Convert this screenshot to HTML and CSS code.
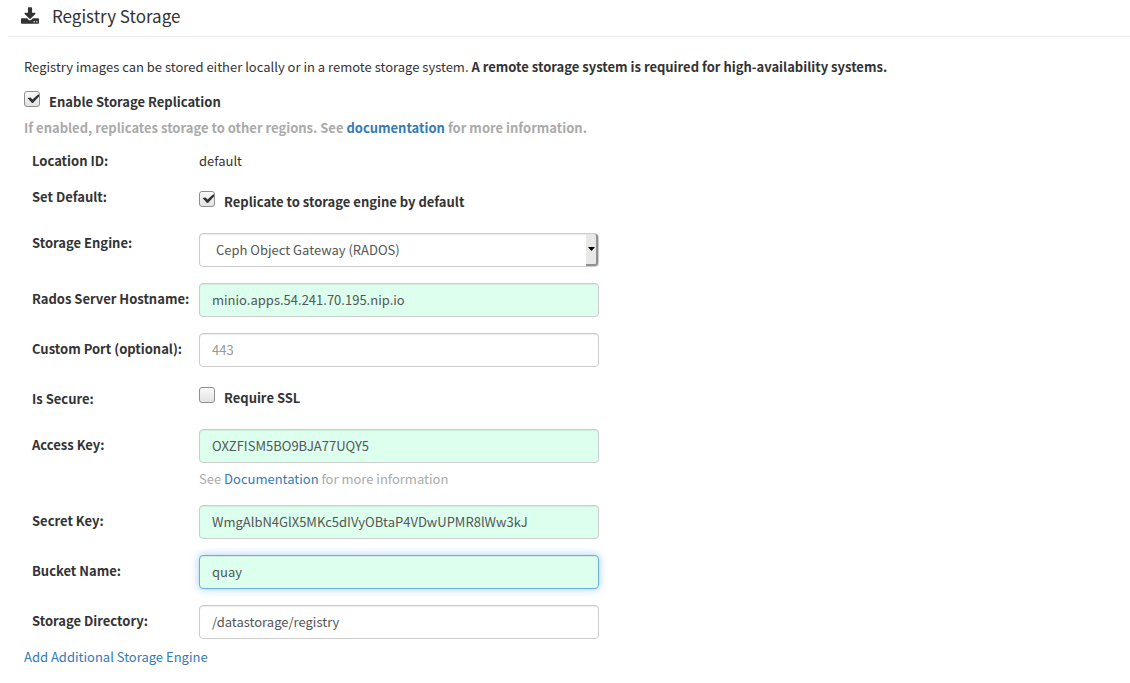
FILE: index.html
```html
<!DOCTYPE html>
<html lang="en">
<head>
<meta charset="utf-8">
<meta name="viewport" content="width=device-width, initial-scale=1">
<title>Registry Storage</title>
<link rel="stylesheet" href="styles.css">
</head>
<body>
<section class="panel">
  <header class="panel-header">
    <svg class="panel-icon" viewBox="0 0 1664 1536" aria-hidden="true"><path fill="currentColor" d="M1280 1344q0-26-19-45t-45-19-45 19-19 45 19 45 45 19 45-19 19-45zm256 0q0-26-19-45t-45-19-45 19-19 45 19 45 45 19 45-19 19-45zm128-224v320q0 40-28 68t-68 28h-1472q-40 0-68-28t-28-68v-320q0-40 28-68t68-28h465l135 136q58 56 136 56t136-56l136-136h464q40 0 68 28t28 68zm-325-569q17 41-14 70l-448 448q-18 19-45 19t-45-19l-448-448q-31-29-14-70 17-39 59-39h256v-448q0-26 19-45t45-19h256q26 0 45 19t19 45v448h256q42 0 59 39z"/></svg>
    <h1 class="panel-title">Registry Storage</h1>
  </header>
  <form class="panel-body">
    <p class="intro">Registry images can be stored either locally or in a remote storage system. <strong>A remote storage system is required for high-availability systems.</strong></p>
    <div class="check check-top">
      <input class="check-box" type="checkbox" id="replication" checked>
      <label class="check-label" for="replication">Enable Storage Replication</label>
    </div>
    <p class="help help-strong">If enabled, replicates storage to other regions. See <a class="link" href="#">documentation</a> for more information.</p>

    <div class="fields">
      <div class="row">
        <span class="label">Location ID:</span>
        <span class="value">default</span>
      </div>
      <div class="row">
        <span class="label">Set Default:</span>
        <div class="check check-row">
          <input class="check-box" type="checkbox" id="by-default" checked>
          <label class="check-label" for="by-default">Replicate to storage engine by default</label>
        </div>
      </div>
      <div class="row">
        <label class="label" for="engine">Storage Engine:</label>
        <div class="select">
          <select class="control select-control" id="engine"><option>Ceph Object Gateway (RADOS)</option></select>
          <span class="select-button"><svg class="select-arrow" viewBox="0 0 7 4" aria-hidden="true"><path d="M0 0h7L3.500 4z"/></svg></span>
        </div>
      </div>
      <div class="row">
        <label class="label label-input" for="host">Rados Server Hostname:</label>
        <input class="control filled" type="text" id="host" value="minio.apps.54.241.70.195.nip.io">
      </div>
      <div class="row">
        <label class="label label-input" for="port">Custom Port (optional):</label>
        <input class="control" type="text" id="port" placeholder="443">
      </div>
      <div class="row">
        <span class="label label-input">Is Secure:</span>
        <div class="check check-row">
          <input class="check-box" type="checkbox" id="ssl">
          <label class="check-label" for="ssl">Require SSL</label>
        </div>
      </div>
      <div class="row">
        <label class="label label-input" for="access">Access Key:</label>
        <div class="stack">
          <input class="control filled" type="text" id="access" value="OXZFISM5BO9BJA77UQY5">
          <p class="help">See <a class="link" href="#">Documentation</a> for more information</p>
        </div>
      </div>
      <div class="row">
        <label class="label label-input" for="secret">Secret Key:</label>
        <input class="control filled" type="text" id="secret" value="WmgAlbN4GlX5MKc5dIVyOBtaP4VDwUPMR8lWw3kJ">
      </div>
      <div class="row">
        <label class="label label-input" for="bucket">Bucket Name:</label>
        <input class="control filled active" type="text" id="bucket" value="quay">
      </div>
      <div class="row">
        <label class="label label-input" for="directory">Storage Directory:</label>
        <input class="control" type="text" id="directory" value="/datastorage/registry">
      </div>
    </div>
    <a class="link" href="#">Add Additional Storage Engine</a>
  </form>
</section>
</body>
</html>
```
FILE: styles.css
```css
* { box-sizing: border-box; }

body {
  margin: 0;
  background: #fff;
  color: #333;
  font-family: "Noto Sans CJK SC", "Noto Sans", sans-serif;
  font-size: 13px;
  line-height: 20px;
}

p { margin: 0; }

.panel { margin-left: 8px; }

.panel-header {
  display: flex;
  align-items: center;
  gap: 13px;
  height: 37px;
  padding: 0 13px 6px;
  border-bottom: 1px solid #eee;
}

.panel-icon { width: 18px; height: 17px; }

.panel-title {
  margin: 0;
  padding-top: 2px;
  font-size: 17px;
  font-weight: 400;
  line-height: 24px;
}

.panel-body { padding: 20px 16px 16px; }

.link { color: #337ab7; text-decoration: none; }
.link:hover { text-decoration: underline; }

.help { color: #aaa; }
.help-strong { margin-top: 6px; font-weight: 700; }

.check { display: flex; align-items: flex-start; gap: 9px; }
.check-top { margin-top: 14px; }
.check-row { padding: 4px 0 5px; }

.check-label { padding-top: 1px; font-weight: 700; }

.check-box {
  appearance: none;
  flex: none;
  width: 16px;
  height: 16px;
  margin: 0;
  border: 1px solid #8f8f8c;
  border-radius: 3px;
  background: linear-gradient(#fafafa, #e2e2e2);
}

.check-box:checked {
  background: url("data:image/svg+xml,%3Csvg xmlns='http://www.w3.org/2000/svg' viewBox='0 0 14 14'%3E%3Cpath d='M2.500 6L5.500 5.500 7.500 7.500 13 2.500H14V4.500L8 11H7z' fill='%232e3436'/%3E%3C/svg%3E"), linear-gradient(#fafafa, #e2e2e2);
}

.fields { margin-top: 5px; }

.row {
  display: grid;
  grid-template-columns: 159px minmax(0, 400px);
  column-gap: 8px;
  align-items: start;
  padding: 8px;
}

.label { font-weight: 700; white-space: nowrap; }
.label-input { padding-top: 6px; }

.stack { display: grid; gap: 6px; }

.control {
  width: 100%;
  height: 34px;
  margin: 0;
  padding: 5px 12px 7px;
  border: 1px solid #ccc;
  border-radius: 4px;
  background: #fff;
  box-shadow: inset 0 1px 1px rgba(0, 0, 0, 0.075);
  color: #555;
  font: inherit;
  outline: none;
}

.control::placeholder { color: #999; opacity: 1; }

.filled { background: #ddffee; }

.active,
.control:focus {
  border-color: #66afe9;
  box-shadow: inset 0 1px 1px rgba(0, 0, 0, 0.075), 0 0 8px rgba(102, 175, 233, 0.6);
}

.select { position: relative; }

.select-control { display: block; padding: 6px 16px; appearance: none; }

.select-button {
  position: absolute;
  top: 1px;
  right: 1px;
  bottom: 1px;
  display: flex;
  align-items: center;
  justify-content: center;
  width: 12px;
  border-right: 2px solid #909192;
  border-bottom: 2px solid #909192;
  border-radius: 0 3px 3px 0;
  background: #e8e8e7;
  pointer-events: none;
}

.select-arrow { width: 7px; height: 4px; }
```
